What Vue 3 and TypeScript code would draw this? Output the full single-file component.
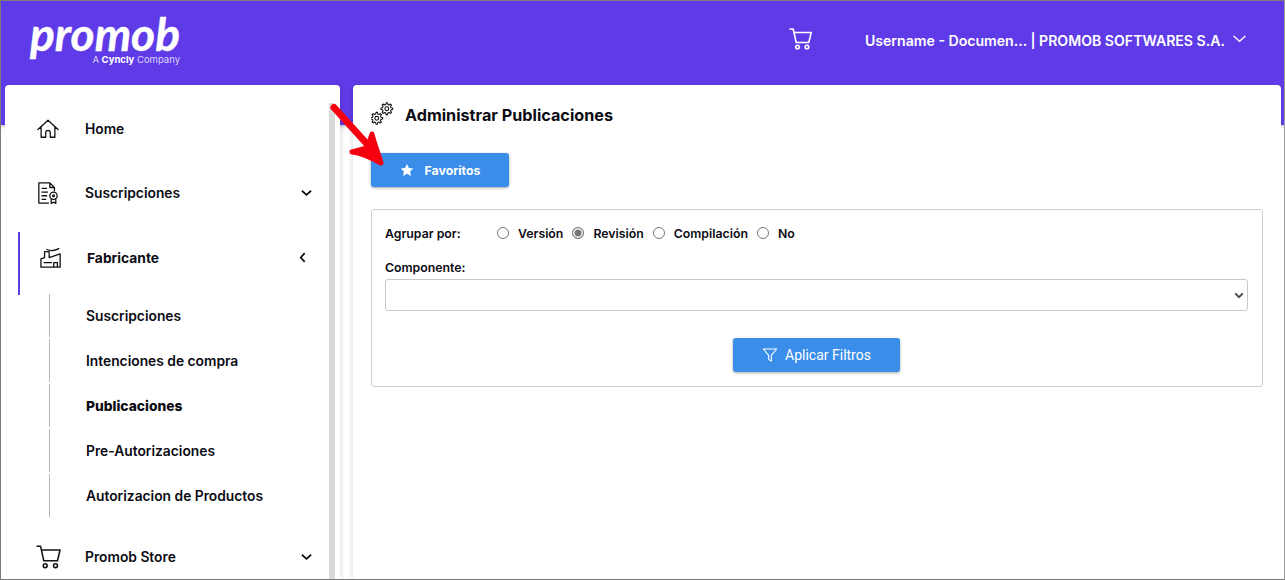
<template>
  <div class="frame">
    <header class="topbar">
      <div class="logo">
        <span class="logo-word">promob</span>
        <span class="logo-sub">A <b>Cyncly</b> Company</span>
      </div>
      <div class="topbar-right">
        <svg class="top-cart" viewBox="0 0 24 24" fill="none" stroke="currentColor" stroke-width="1.600" stroke-linecap="round" stroke-linejoin="round">
          <path d="M1 2h3.200l3 13.500h12.600l2.400-10H5" />
          <circle cx="8.500" cy="20" r="1.800" />
          <circle cx="18" cy="20" r="1.800" />
        </svg>
        <span class="user">Username - Documen... | PROMOB SOFTWARES S.A.</span>
        <svg class="user-caret" viewBox="0 0 14 8" fill="none" stroke="currentColor" stroke-width="1.400" stroke-linecap="round">
          <path d="M1 1l6 5.500L13 1" />
        </svg>
      </div>
    </header>

    <div class="body-row">
      <aside class="sidebar">
        <div class="scroll-track"></div>
        <nav class="nav">
          <a class="nav-item">
            <svg class="nav-icon" viewBox="0 0 24 24" fill="none" stroke="#111" stroke-width="1.400" stroke-linejoin="round" stroke-linecap="round">
              <path d="M1 12.500L12 2.500l11 10M4.500 10v11h5v-5a2.500 2.500 0 015 0v5h5V10" />
            </svg>
            <span>Home</span>
          </a>

          <a class="nav-item has-caret">
            <svg class="nav-icon" viewBox="0 0 24 24" fill="none" stroke="#111" stroke-width="1.400" stroke-linejoin="round">
              <path d="M13 23H2V1h12l5 5v4M14 1v5h5M5 7h6M5 11h7M5 15h6M5 19h5" />
              <circle cx="18" cy="15" r="4" />
              <circle cx="18" cy="15" r="1" />
              <path d="M15.500 18.500V23.500l2.500-1.500 2.500 1.500v-5" />
            </svg>
            <span>Suscripciones</span>
            <svg class="caret" viewBox="0 0 12 8" fill="none" stroke="#111" stroke-width="2"><path d="M1 1.500l5 4.500 5-4.500" /></svg>
          </a>

          <a class="nav-item active">
            <svg class="nav-icon" viewBox="0 0 24 24" fill="none" stroke="#111" stroke-width="1.400" stroke-linejoin="round">
              <path d="M1 22V13l4-1.500V5h5v6.500l12-4V22zM7 2.500c4 2 9 2 14-1M4 17h9M15 22v-5h4v5" />
            </svg>
            <span>Fabricante</span>
            <svg class="caret left" viewBox="0 0 8 12" fill="none" stroke="#111" stroke-width="2"><path d="M6.500 1L2 6l4.500 5" /></svg>
          </a>

          <ul class="subnav">
            <li v-for="item in subItems" :key="item" :class="{ current: item === 'Publicaciones' }">{{ item }}</li>
          </ul>

          <a class="nav-item has-caret store">
            <svg class="nav-icon cart" viewBox="0 0 24 24" fill="none" stroke="#111" stroke-width="1.400" stroke-linecap="round" stroke-linejoin="round">
              <path d="M1 2h3.200l3 13.500h12.600l2.400-10H5" />
              <circle cx="8.500" cy="20" r="1.800" />
              <circle cx="18" cy="20" r="1.800" />
            </svg>
            <span>Promob Store</span>
            <svg class="caret" viewBox="0 0 12 8" fill="none" stroke="#111" stroke-width="2"><path d="M1 1.500l5 4.500 5-4.500" /></svg>
          </a>
        </nav>
      </aside>

      <main class="panel">
        <div class="title-row">
          <svg class="gears" viewBox="0 0 24 24" fill="none" stroke="#111" stroke-width="1.100" stroke-linejoin="round">
            <path :d="gearPath(16.500, 7, 6.200, 4.600)" />
            <circle cx="16.500" cy="7" r="2" />
            <path :d="gearPath(6, 17, 6.200, 4.600)" />
            <circle cx="6" cy="17" r="2" />
          </svg>
          <h1>Administrar Publicaciones</h1>
        </div>

        <button class="btn btn-fav">
          <svg class="star" viewBox="0 0 24 24" fill="#fff"><path d="M12 1.500l3.300 6.900 7.500 1-5.500 5.200 1.400 7.500L12 18.400l-6.700 3.700 1.400-7.500L1.200 9.400l7.500-1z" /></svg>
          Favoritos
        </button>

        <section class="filters">
          <div class="radio-row">
            <label class="group-label">Agrupar por:</label>
            <div class="radios">
              <label v-for="opt in options" :key="opt" class="radio">
                <span class="dot" :class="{ on: opt === selected }"></span>{{ opt }}
              </label>
            </div>
          </div>

          <label class="field-label">Componente:</label>
          <div class="select">
            <svg viewBox="0 0 12 8" fill="none" stroke="#444" stroke-width="2.200"><path d="M1.500 1.500L6 6l4.500-4.500" /></svg>
          </div>

          <div class="apply-row">
            <button class="btn btn-apply">
              <svg class="funnel" viewBox="0 0 24 24" fill="none" stroke="#fff" stroke-width="1.600" stroke-linejoin="round"><path d="M2 3h20l-8 9.500V21l-4 -2.500v-6z" /></svg>
              Aplicar Filtros
            </button>
          </div>
        </section>
      </main>
    </div>

    <svg class="red-arrow" viewBox="0 0 60 64" fill="#f5000f" stroke="#f5000f" stroke-linecap="round" stroke-linejoin="round">
      <path d="M4 3.500L46 50" fill="none" stroke-width="7" />
      <path d="M22 48c9 1 18 5 29 11-3-11-7-20-9-29l-5 14z" stroke-width="5" />
    </svg>
  </div>
</template>

<script setup lang="ts">
import { ref } from 'vue';

const subItems = [
  'Suscripciones',
  'Intenciones de compra',
  'Publicaciones',
  'Pre-Autorizaciones',
  'Autorizacion de Productos',
];

const options = ['Versión', 'Revisión', 'Compilación', 'No'];
const selected = ref('Revisión');

// little toothed ring for the title icon
const gearPath = (cx: number, cy: number, outer: number, inner: number) => {
  const teeth = 8;
  const pts: string[] = [];
  for (let i = 0; i < teeth; i++) {
    const a = (i / teeth) * Math.PI * 2;
    const step = (Math.PI * 2) / teeth;
    const corners: [number, number][] = [
      [inner, a - step * 0.3],
      [outer, a - step * 0.16],
      [outer, a + step * 0.16],
      [inner, a + step * 0.3],
    ];
    for (const [r, t] of corners) {
      pts.push(`${(cx + r * Math.cos(t)).toFixed(2)} ${(cy + r * Math.sin(t)).toFixed(2)}`);
    }
  }
  return `M${pts.join('L')}Z`;
};
</script>

<style>
html, body { margin: 0; background: #fff; }
</style>

<style scoped>
.frame {
  position: relative;
  width: 1285px;
  height: 580px;
  box-sizing: border-box;
  border: 1px solid #7a7a7a;
  border-right-color: #9a9a9a;
  overflow: hidden;
  background: #fff;
  font-family: Inter, "Liberation Sans", sans-serif;
  color: #0c0c14;
}

.topbar {
  height: 124px;
  background: #5f3be8;
  color: #fff;
  display: flex;
  justify-content: space-between;
  align-items: flex-start;
  box-shadow: 0 1px 4px rgba(0, 0, 0, 0.35);
  padding: 0 38px 0 27px;
}

.logo {
  display: flex;
  flex-direction: column;
  align-items: flex-end;
  width: 152px;
  padding-top: 12px;
}
.logo-word {
  font-family: Lato, sans-serif;
  font-style: italic;
  font-weight: 700;
  font-size: 46px;
  line-height: 42px;
  -webkit-text-stroke: 0.4px #fff;
}
.logo-sub {
  font-size: 9.500px;
  line-height: 11px;
  margin-top: -1px;
  color: #dcd4fb;
}
.logo-sub b { color: #fff; font-weight: 700; }

.topbar-right {
  display: flex;
  align-items: center;
  padding-top: 24px;
}
.top-cart { width: 24px; height: 24px; margin-right: 52px; margin-top: -3px; }
.user { font-size: 14.100px; font-weight: 600; line-height: 28px; padding-top: 2px; }
.user-caret { width: 13px; height: 8px; margin-left: 8px; margin-top: -2px; }

.body-row {
  display: flex;
  margin-top: -40px;
  padding-left: 4px;
  position: relative;
  height: 495px;
}

.sidebar {
  position: relative;
  width: 335px;
  background: #fff;
  border-radius: 4px 4px 0 0;
  flex: none;
  box-shadow: 3px 0 5px -2px rgba(0, 0, 0, 0.14);
}
.scroll-track {
  position: absolute;
  top: 18px;
  bottom: 0;
  right: 5px;
  width: 6px;
  background: #d9d9d9;
}
.nav { padding-left: 13px; }

.nav-item {
  display: flex;
  align-items: center;
  font-size: 13.800px;
  font-weight: 600;
  height: 64px;
  padding-left: 17px;
  padding-right: 28px;
  border-left: 2px solid transparent;
}
.nav-item:first-child { margin-top: 12px; }
.nav-item span { margin-left: 26px; flex: 1; }
.nav-icon { width: 22px; height: 24px; flex: none; }
.caret { width: 11px; height: 8px; }

.active {
  border-left-color: #5f3be8;
  height: 51px;
  padding-bottom: 12px;
  margin-top: 7px;
  padding-left: 20px;
  font-weight: 700;
}
.active span { margin-left: 25px; }
.caret.left { width: 7px; height: 11px; margin-right: 6px; }

.subnav {
  list-style: none;
  margin: -1px 0 0 31px;
  padding: 0;
}
.subnav li {
  height: 43px;
  margin-bottom: 2px;
  border-left: 1px solid #b5b5b5;
  padding-left: 36px;
  font-size: 13.800px;
  font-weight: 600;
  display: flex;
  align-items: center;
}
.subnav .current { font-weight: 800; }
.store { height: 40px; margin-top: 20px; }
.cart { width: 26px; height: 26px; margin-left: -1px; margin-right: -3px; }

.panel {
  flex: 1;
  margin-left: 13px;
  margin-right: 3px;
  background: #fff;
  border-radius: 4px 4px 0 0;
  padding: 18px 18px 0;
  box-shadow: -3px 0 5px -2px rgba(0, 0, 0, 0.14);
}
.title-row { display: flex; align-items: center; gap: 11px; }
.gears { width: 23px; height: 23px; margin-top: -3px; }
h1 { margin: 0; font-size: 16.200px; font-weight: 700; line-height: 24px; }

.btn {
  border: 0;
  border-radius: 3px;
  background: #3b8dea;
  color: #fff;
  font-family: inherit;
  display: flex;
  align-items: center;
  justify-content: center;
  box-shadow: 0 1px 3px rgba(0, 0, 0, 0.35);
}
.btn-fav {
  width: 138px;
  height: 34px;
  margin-top: 26px;
  font-size: 12.300px;
  font-weight: 700;
  gap: 11px;
}
.star { width: 14px; height: 14px; }

.filters {
  margin-top: 22px;
  border: 1px solid #cfcfcf;
  border-radius: 3px;
  padding: 13px 14px 15px 13px;
  height: 178px;
  box-sizing: border-box;
}
.radio-row { display: flex; align-items: center; height: 20px; font-size: 12.300px; font-weight: 600; }
.group-label { width: 112px; }
.radios { display: flex; gap: 9px; }
.radio { display: flex; align-items: center; gap: 9px; }
.dot {
  width: 10px;
  height: 10px;
  border: 1px solid #777;
  border-radius: 50%;
  box-sizing: content-box;
}
.dot.on { background: #777; box-shadow: inset 0 0 0 1.500px #fff; }

.field-label { display: block; font-size: 12.300px; font-weight: 600; margin-top: 17px; line-height: 15px; }
.select {
  height: 30px;
  margin-top: 4px;
  border: 1px solid #c9c9c9;
  border-radius: 3px;
  display: flex;
  align-items: center;
  justify-content: flex-end;
  padding-right: 3px;
}
.select svg { width: 10px; height: 7px; }

.apply-row { display: flex; justify-content: center; margin-top: 27px; }
.btn-apply {
  width: 167px;
  height: 34px;
  font-family: Roboto, sans-serif;
  font-size: 14px;
  gap: 7px;
}
.funnel { width: 16px; height: 16px; }

.red-arrow {
  position: absolute;
  left: 329px;
  top: 103px;
  width: 60px;
  height: 64px;
}
</style>
